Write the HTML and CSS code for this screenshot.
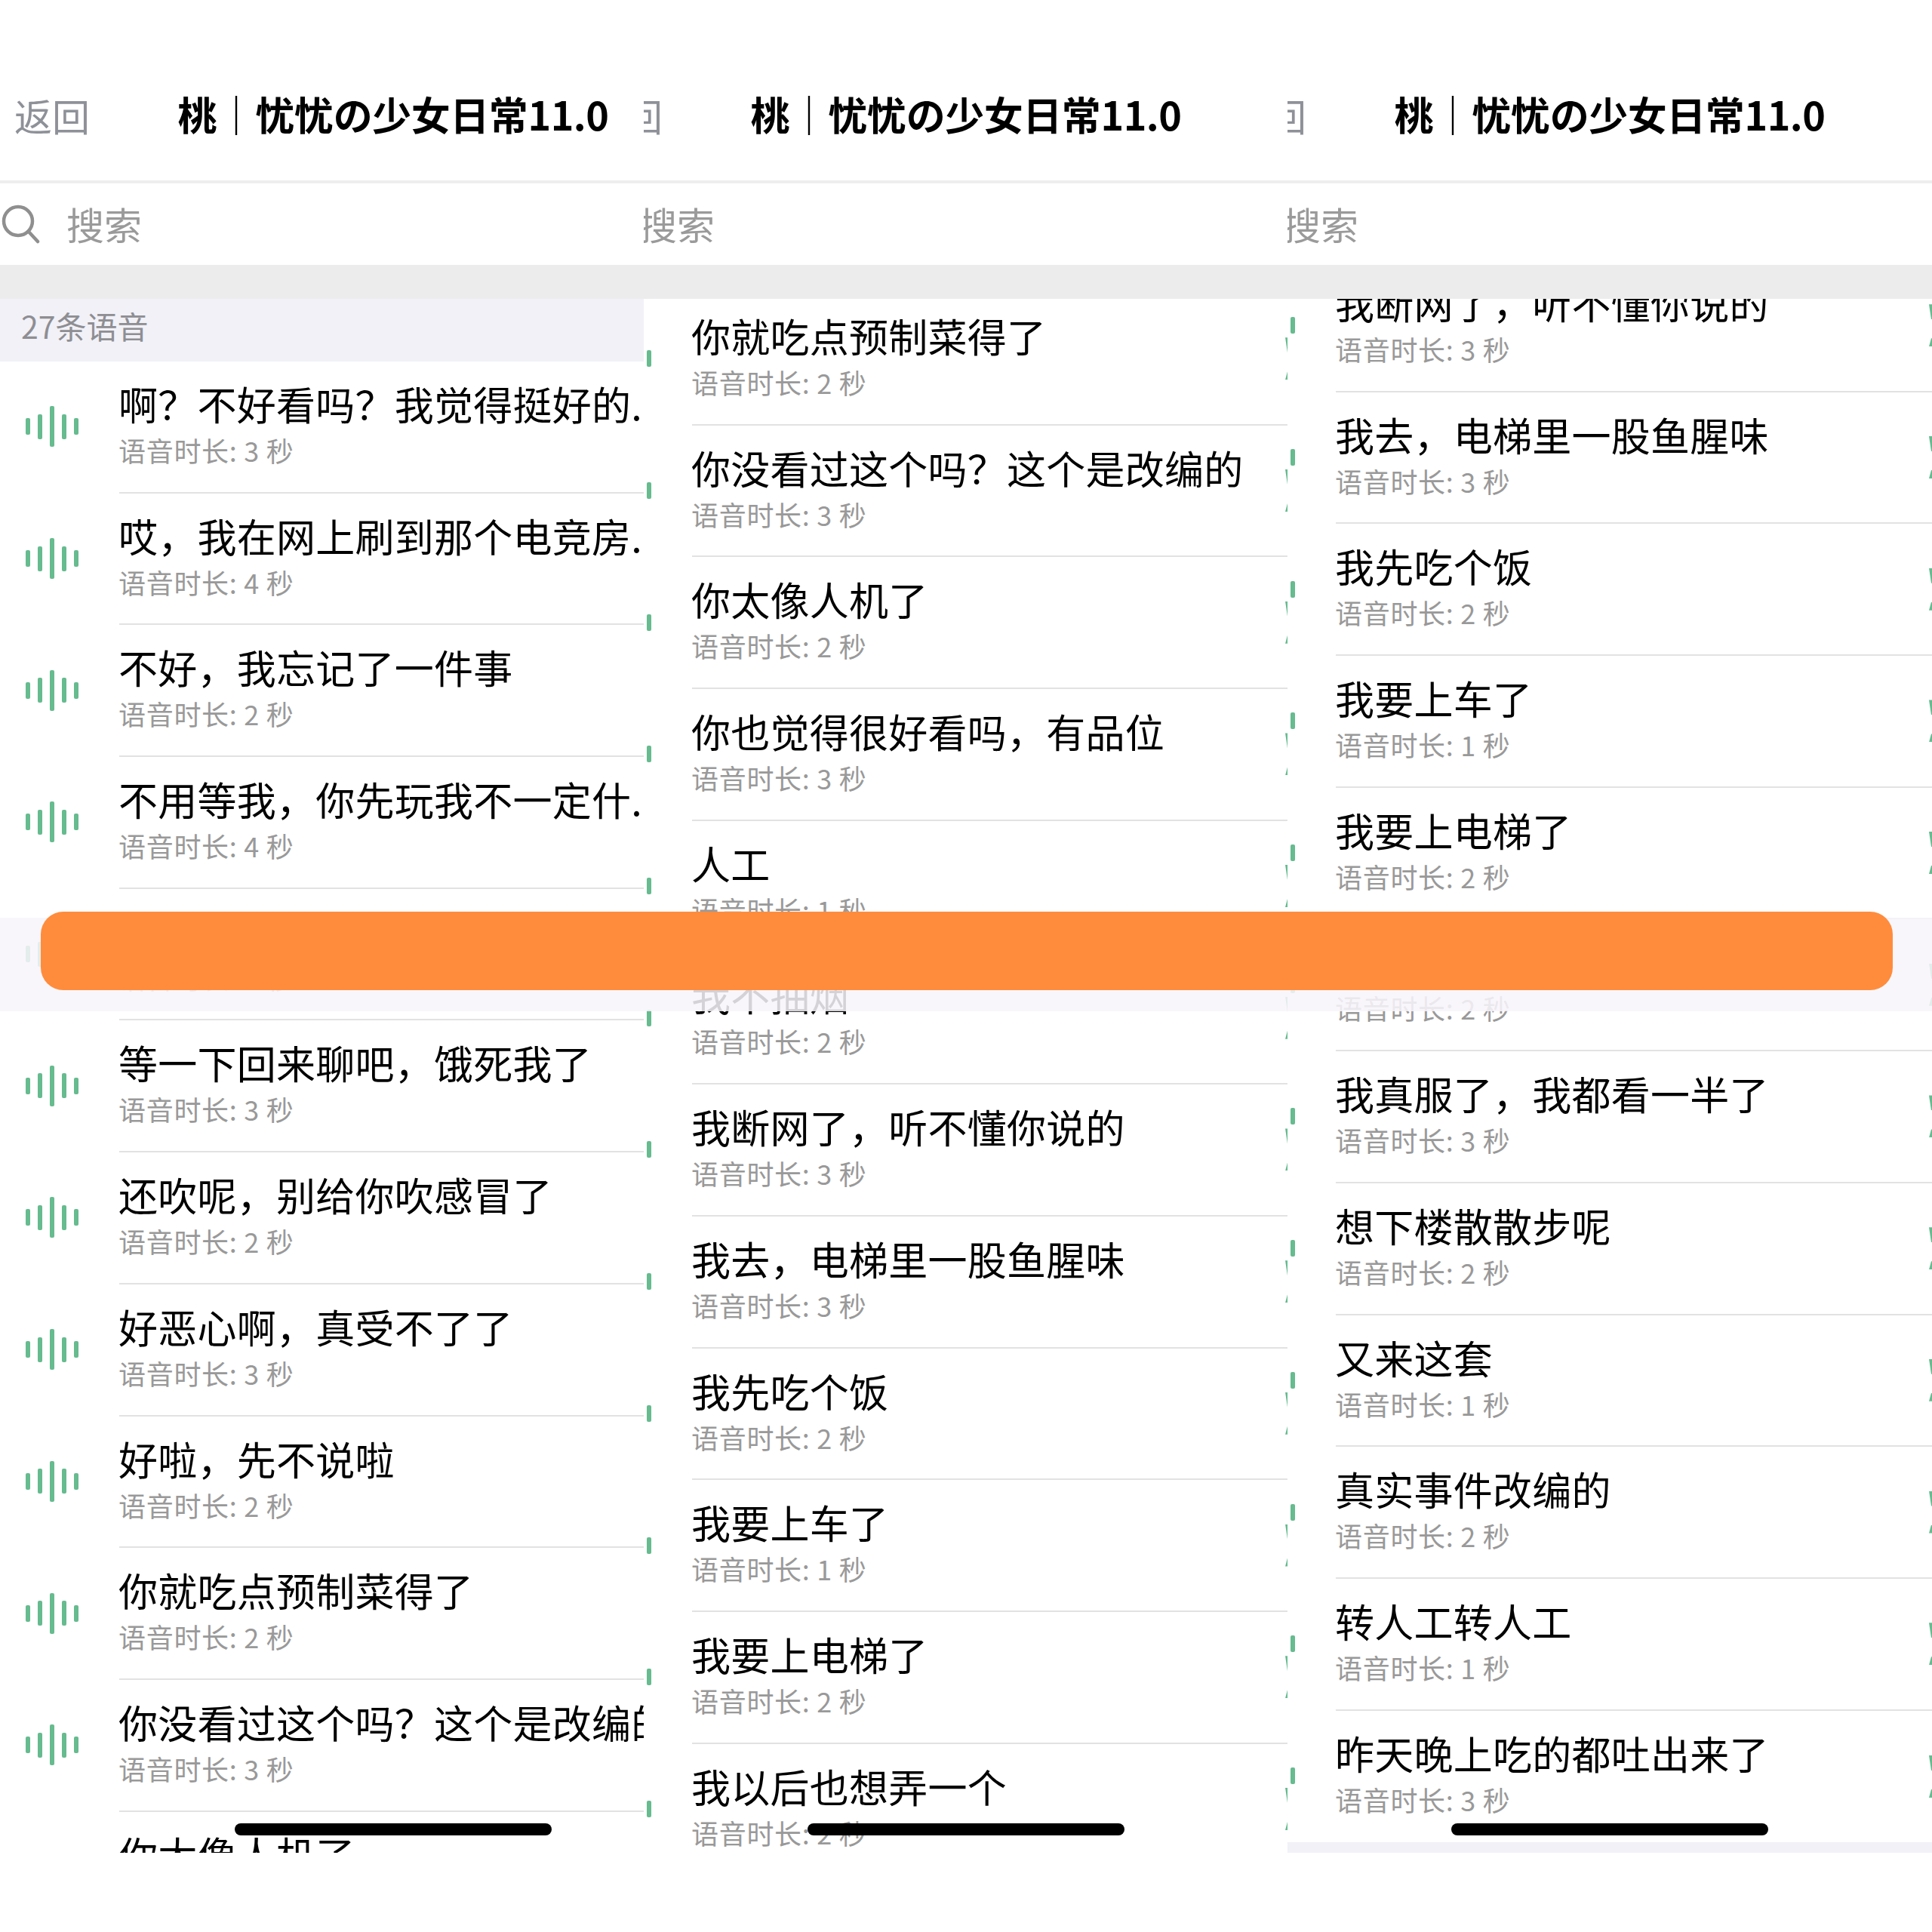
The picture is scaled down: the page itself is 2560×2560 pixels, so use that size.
FILE: index.html
```html
<!DOCTYPE html>
<html lang="zh-CN">
<head>
<meta charset="utf-8">
<title>语音列表</title>
<link rel="stylesheet" href="styles.css">
</head>
<body>
<main class="page">

<section class="panel">
  <div class="screen">
    <header class="nav"><span class="back">返回</span><h1 class="nav-title">桃｜忧忧の少女日常11.0</h1></header>
    <div class="search">
      <svg class="search-icon" viewBox="0 0 52 52" width="52" height="52"><circle cx="23" cy="22" r="19"/><path d="M37 36 L49 49"/></svg>
      <span class="search-text">搜索</span>
    </div>
    <div class="band"></div>
    <div class="list">
      <div class="count">27条语音</div>
      <div class="row"><div class="wave"><span></span><span></span><span></span><span></span><span></span></div><div class="body"><div class="text"><div class="title">啊？不好看吗？我觉得挺好的...</div><div class="sub">语音时长: 3 秒</div></div><span class="mark"></span></div></div>
      <div class="row"><div class="wave"><span></span><span></span><span></span><span></span><span></span></div><div class="body"><div class="text"><div class="title">哎，我在网上刷到那个电竞房...</div><div class="sub">语音时长: 4 秒</div></div><span class="mark"></span></div></div>
      <div class="row"><div class="wave"><span></span><span></span><span></span><span></span><span></span></div><div class="body"><div class="text"><div class="title">不好，我忘记了一件事</div><div class="sub">语音时长: 2 秒</div></div><span class="mark"></span></div></div>
      <div class="row"><div class="wave"><span></span><span></span><span></span><span></span><span></span></div><div class="body"><div class="text"><div class="title">不用等我，你先玩我不一定什...</div><div class="sub">语音时长: 4 秒</div></div><span class="mark"></span></div></div>
      <div class="row"><div class="wave"><span></span><span></span><span></span><span></span><span></span></div><div class="body"><div class="text"><div class="title">&nbsp;</div><div class="sub">语音时长: 2 秒</div></div><span class="mark"></span></div></div>
      <div class="row"><div class="wave"><span></span><span></span><span></span><span></span><span></span></div><div class="body"><div class="text"><div class="title">等一下回来聊吧，饿死我了</div><div class="sub">语音时长: 3 秒</div></div><span class="mark"></span></div></div>
      <div class="row"><div class="wave"><span></span><span></span><span></span><span></span><span></span></div><div class="body"><div class="text"><div class="title">还吹呢，别给你吹感冒了</div><div class="sub">语音时长: 2 秒</div></div><span class="mark"></span></div></div>
      <div class="row"><div class="wave"><span></span><span></span><span></span><span></span><span></span></div><div class="body"><div class="text"><div class="title">好恶心啊，真受不了了</div><div class="sub">语音时长: 3 秒</div></div><span class="mark"></span></div></div>
      <div class="row"><div class="wave"><span></span><span></span><span></span><span></span><span></span></div><div class="body"><div class="text"><div class="title">好啦，先不说啦</div><div class="sub">语音时长: 2 秒</div></div><span class="mark"></span></div></div>
      <div class="row"><div class="wave"><span></span><span></span><span></span><span></span><span></span></div><div class="body"><div class="text"><div class="title">你就吃点预制菜得了</div><div class="sub">语音时长: 2 秒</div></div><span class="mark"></span></div></div>
      <div class="row"><div class="wave"><span></span><span></span><span></span><span></span><span></span></div><div class="body"><div class="text"><div class="title">你没看过这个吗？这个是改编的</div><div class="sub">语音时长: 3 秒</div></div><span class="mark"></span></div></div>
      <div class="row"><div class="wave"><span></span><span></span><span></span><span></span><span></span></div><div class="body"><div class="text"><div class="title">你太像人机了</div><div class="sub">语音时长: 2 秒</div></div><span class="mark"></span></div></div>
    </div>
    <div class="home-bar"></div>
  </div>
</section>

<section class="panel">
  <div class="screen screen-shifted">
    <header class="nav"><span class="back">返回</span><h1 class="nav-title">桃｜忧忧の少女日常11.0</h1></header>
    <div class="search">
      <svg class="search-icon" viewBox="0 0 52 52" width="52" height="52"><circle cx="23" cy="22" r="19"/><path d="M37 36 L49 49"/></svg>
      <span class="search-text">搜索</span>
    </div>
    <div class="band"></div>
    <div class="list list-mid">
      <div class="row"><div class="wave"><span></span><span></span><span></span><span></span><span></span></div><div class="body"><div class="text"><div class="title">你就吃点预制菜得了</div><div class="sub">语音时长: 2 秒</div></div><span class="mark"></span></div></div>
      <div class="row"><div class="wave"><span></span><span></span><span></span><span></span><span></span></div><div class="body"><div class="text"><div class="title">你没看过这个吗？这个是改编的</div><div class="sub">语音时长: 3 秒</div></div><span class="mark"></span></div></div>
      <div class="row"><div class="wave"><span></span><span></span><span></span><span></span><span></span></div><div class="body"><div class="text"><div class="title">你太像人机了</div><div class="sub">语音时长: 2 秒</div></div><span class="mark"></span></div></div>
      <div class="row"><div class="wave"><span></span><span></span><span></span><span></span><span></span></div><div class="body"><div class="text"><div class="title">你也觉得很好看吗，有品位</div><div class="sub">语音时长: 3 秒</div></div><span class="mark"></span></div></div>
      <div class="row"><div class="wave"><span></span><span></span><span></span><span></span><span></span></div><div class="body"><div class="text"><div class="title">人工</div><div class="sub">语音时长: 1 秒</div></div><span class="mark"></span></div></div>
      <div class="row"><div class="wave"><span></span><span></span><span></span><span></span><span></span></div><div class="body"><div class="text"><div class="title">我不抽烟</div><div class="sub">语音时长: 2 秒</div></div><span class="mark"></span></div></div>
      <div class="row"><div class="wave"><span></span><span></span><span></span><span></span><span></span></div><div class="body"><div class="text"><div class="title">我断网了，听不懂你说的</div><div class="sub">语音时长: 3 秒</div></div><span class="mark"></span></div></div>
      <div class="row"><div class="wave"><span></span><span></span><span></span><span></span><span></span></div><div class="body"><div class="text"><div class="title">我去，电梯里一股鱼腥味</div><div class="sub">语音时长: 3 秒</div></div><span class="mark"></span></div></div>
      <div class="row"><div class="wave"><span></span><span></span><span></span><span></span><span></span></div><div class="body"><div class="text"><div class="title">我先吃个饭</div><div class="sub">语音时长: 2 秒</div></div><span class="mark"></span></div></div>
      <div class="row"><div class="wave"><span></span><span></span><span></span><span></span><span></span></div><div class="body"><div class="text"><div class="title">我要上车了</div><div class="sub">语音时长: 1 秒</div></div><span class="mark"></span></div></div>
      <div class="row"><div class="wave"><span></span><span></span><span></span><span></span><span></span></div><div class="body"><div class="text"><div class="title">我要上电梯了</div><div class="sub">语音时长: 2 秒</div></div><span class="mark"></span></div></div>
      <div class="row"><div class="wave"><span></span><span></span><span></span><span></span><span></span></div><div class="body"><div class="text"><div class="title">我以后也想弄一个</div><div class="sub">语音时长: 2 秒</div></div><span class="mark"></span></div></div>
    </div>
    <div class="home-bar"></div>
  </div>
</section>

<section class="panel">
  <div class="screen screen-shifted">
    <header class="nav"><span class="back">返回</span><h1 class="nav-title">桃｜忧忧の少女日常11.0</h1></header>
    <div class="search">
      <svg class="search-icon" viewBox="0 0 52 52" width="52" height="52"><circle cx="23" cy="22" r="19"/><path d="M37 36 L49 49"/></svg>
      <span class="search-text">搜索</span>
    </div>
    <div class="band"></div>
    <div class="list list-end">
      <div class="row"><div class="wave"><span></span><span></span><span></span><span></span><span></span></div><div class="body"><div class="text"><div class="title">我断网了，听不懂你说的</div><div class="sub">语音时长: 3 秒</div></div><span class="mark"></span></div></div>
      <div class="row"><div class="wave"><span></span><span></span><span></span><span></span><span></span></div><div class="body"><div class="text"><div class="title">我去，电梯里一股鱼腥味</div><div class="sub">语音时长: 3 秒</div></div><span class="mark"></span></div></div>
      <div class="row"><div class="wave"><span></span><span></span><span></span><span></span><span></span></div><div class="body"><div class="text"><div class="title">我先吃个饭</div><div class="sub">语音时长: 2 秒</div></div><span class="mark"></span></div></div>
      <div class="row"><div class="wave"><span></span><span></span><span></span><span></span><span></span></div><div class="body"><div class="text"><div class="title">我要上车了</div><div class="sub">语音时长: 1 秒</div></div><span class="mark"></span></div></div>
      <div class="row"><div class="wave"><span></span><span></span><span></span><span></span><span></span></div><div class="body"><div class="text"><div class="title">我要上电梯了</div><div class="sub">语音时长: 2 秒</div></div><span class="mark"></span></div></div>
      <div class="row"><div class="wave"><span></span><span></span><span></span><span></span><span></span></div><div class="body"><div class="text"><div class="title">我以后也想弄一个</div><div class="sub">语音时长: 2 秒</div></div><span class="mark"></span></div></div>
      <div class="row"><div class="wave"><span></span><span></span><span></span><span></span><span></span></div><div class="body"><div class="text"><div class="title">我真服了，我都看一半了</div><div class="sub">语音时长: 3 秒</div></div><span class="mark"></span></div></div>
      <div class="row"><div class="wave"><span></span><span></span><span></span><span></span><span></span></div><div class="body"><div class="text"><div class="title">想下楼散散步呢</div><div class="sub">语音时长: 2 秒</div></div><span class="mark"></span></div></div>
      <div class="row"><div class="wave"><span></span><span></span><span></span><span></span><span></span></div><div class="body"><div class="text"><div class="title">又来这套</div><div class="sub">语音时长: 1 秒</div></div><span class="mark"></span></div></div>
      <div class="row"><div class="wave"><span></span><span></span><span></span><span></span><span></span></div><div class="body"><div class="text"><div class="title">真实事件改编的</div><div class="sub">语音时长: 2 秒</div></div><span class="mark"></span></div></div>
      <div class="row"><div class="wave"><span></span><span></span><span></span><span></span><span></span></div><div class="body"><div class="text"><div class="title">转人工转人工</div><div class="sub">语音时长: 1 秒</div></div><span class="mark"></span></div></div>
      <div class="row row-last"><div class="wave"><span></span><span></span><span></span><span></span><span></span></div><div class="body"><div class="text"><div class="title">昨天晚上吃的都吐出来了</div><div class="sub">语音时长: 3 秒</div></div><span class="mark"></span></div></div>
      <div class="list-foot"></div>
    </div>
    <div class="home-bar"></div>
  </div>
</section>

<div class="veil"></div>
<div class="redaction"></div>
</main>
</body>
</html>
```

FILE: styles.css
```css
* { box-sizing: border-box; }
html, body { margin: 0; padding: 0; background: #fff; }
body {
  font-family: "Noto Sans CJK SC", "Noto Sans", sans-serif;
  color: #000;
}
.page {
  position: relative;
  display: grid;
  grid-template-columns: 853px 853px 854px;
  width: 2560px;
  height: 2560px;
  overflow: hidden;
}
.panel { overflow: hidden; height: 2455px; }
.screen {
  position: relative;
  display: flex;
  flex-direction: column;
  width: 1042px;
  height: 2455px;
  background: #fff;
}
.screen-shifted { margin-left: -94px; }

.nav {
  display: flex;
  align-items: center;
  justify-content: center;
  position: relative;
  height: 243px;
  padding-top: 63px;
  border-bottom: 4px solid #eeeeee;
  flex: none;
}
.back {
  position: absolute;
  left: 19px;
  top: 116px;
  font-size: 50px;
  line-height: 72px;
  color: #8e9198;
}
.nav-title {
  margin: 0;
  font-size: 52px;
  line-height: 72px;
  font-weight: 700;
  letter-spacing: -0.45px;
  color: #000;
  white-space: nowrap;
}

.search {
  display: flex;
  align-items: center;
  gap: 35px;
  height: 108px;
  padding-left: 1px;
  padding-bottom: 3px;
  flex: none;
}
.search-icon { fill: none; stroke: #8f8f8f; stroke-width: 4.5; stroke-linecap: round; flex: none; margin-top: 3px; }
.search-text { font-size: 50px; line-height: 72px; color: #9a9a9a; }
.band { height: 45px; background: #ececec; flex: none; }

.list { flex: 1; min-height: 0; overflow: hidden; }
.list-mid .row:first-child { margin-top: -7px; }
.list-end .row:first-child { margin-top: -51px; }
.count {
  height: 83px;
  padding-left: 28px;
  background: #f1f1f7;
  font-size: 41px;
  line-height: 70px;
  color: #8e8e93;
}
.row { display: flex; height: 174.7px; }
.wave {
  display: flex;
  align-items: center;
  gap: 10px;
  width: 158px;
  padding-left: 34px;
  padding-bottom: 2px;
  flex: none;
}
.wave span { width: 6px; height: 22px; border-radius: 2px; background: #66bb8f; }
.wave span:nth-child(2), .wave span:nth-child(4) { height: 33px; }
.wave span:nth-child(3) { height: 54px; }
.body {
  display: flex;
  align-items: center;
  flex: 1;
  min-width: 0;
  border-bottom: 2px solid #e2e2e2;
}
.row-last .body { border-bottom: 0; }
.text { width: 786px; align-self: flex-start; flex: none; padding-top: 21px; }
.title { font-size: 52px; line-height: 70px; letter-spacing: 0.25px; white-space: nowrap; color: #000; margin-left: -1px; }
.sub { margin-top: 1px; font-size: 36px; line-height: 50px; letter-spacing: 0.7px; color: #999; white-space: nowrap; margin-left: -1px; }
.mark { position: relative; width: 6px; height: 56px; flex: none; }
.mark::before, .mark::after {
  content: "";
  position: absolute;
  left: 0;
  width: 6px;
  background: #66bb8f;
}
.mark::before { top: 0; height: 20px; clip-path: polygon(0 0, 100% 0, 100% 100%, 50% 100%); }
.mark::after { bottom: 0; height: 11px; clip-path: polygon(50% 0, 100% 0, 100% 100%, 0 100%); }
.list-foot { height: 20px; background: #f1f1f7; }

.home-bar {
  position: absolute;
  left: 311px;
  top: 2416px;
  width: 420px;
  height: 16px;
  border-radius: 8px;
  background: #000;
}

.veil {
  position: absolute;
  left: 0;
  right: 0;
  top: 1216px;
  height: 124px;
  background: rgba(248, 244, 250, 0.86);
}
.redaction {
  position: absolute;
  left: 54px;
  top: 1208px;
  width: 2454px;
  height: 104px;
  border-radius: 30px;
  background: #ff8c3c;
}
```
